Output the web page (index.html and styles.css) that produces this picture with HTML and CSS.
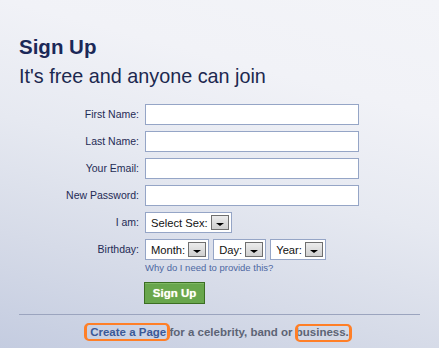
FILE: index.html
```html
<!DOCTYPE html>
<html>
<head>
<meta charset="utf-8">
<link rel="stylesheet" href="styles.css">
</head>
<body>
<div class="page">
  <h1 class="title">Sign Up</h1>
  <h2 class="subtitle">It's free and anyone can join</h2>
  <form class="form">
    <label class="label">First Name:</label>
    <input class="field" type="text">
    <label class="label">Last Name:</label>
    <input class="field" type="text">
    <label class="label">Your Email:</label>
    <input class="field" type="text">
    <label class="label">New Password:</label>
    <input class="field" type="password">
    <label class="label">I am:</label>
    <div class="selects">
      <div class="select"><span>Select Sex:</span><span class="arrow"></span></div>
    </div>
    <label class="label">Birthday:</label>
    <div class="birthday">
      <div class="selects">
        <div class="select"><span>Month:</span><span class="arrow"></span></div>
        <div class="select"><span>Day:</span><span class="arrow"></span></div>
        <div class="select"><span>Year:</span><span class="arrow"></span></div>
      </div>
      <a class="help">Why do I need to provide this?</a>
    </div>
    <div class="actions">
      <button class="btn" type="button">Sign Up</button>
    </div>
  </form>
  <div class="rule"></div>
  <p class="footer"><a class="link mark mark-a">Create a Page</a> for a celebrity, band or <span class="mark mark-b">business.</span></p>
</div>
</body>
</html>
```
FILE: styles.css
```css
html, body {
  margin: 0;
  padding: 0;
  height: 100%;
}
body {
  font-family: "Liberation Sans", Arial, sans-serif;
  background: linear-gradient(195deg, #f3f4f8 0%, #f1f2f7 25%, #e6e9f1 50%, #d6dbe8 75%, #c4cce0 100%);
  min-height: 348px;
}
.page {
  padding: 35px 19px 0 19px;
}
.title {
  margin: 0;
  font-size: 20.5px;
  line-height: 24px;
  font-weight: bold;
  color: #1b2858;
}
.subtitle {
  margin: 6px 0 0 0;
  font-size: 19.8px;
  line-height: 23px;
  font-weight: normal;
  color: #1c284f;
}
.form {
  margin-top: 16px;
  display: grid;
  grid-template-columns: 120px auto;
  column-gap: 6px;
  row-gap: 6px;
  align-items: start;
}
.label {
  text-align: right;
  font-size: 10.5px;
  line-height: 21px;
  color: #1f2b55;
}
.field {
  box-sizing: border-box;
  width: 214px;
  height: 21px;
  margin: 0;
  border: 1px solid #95a5c6;
  background: #fff;
  padding: 0 3px;
}
.selects {
  display: flex;
  gap: 4px;
}
.select {
  box-sizing: border-box;
  height: 21px;
  display: flex;
  align-items: center;
  gap: 3px;
  padding: 0 2px 0 5px;
  border: 1px solid #95a5c6;
  background: #fff;
  font-size: 11.2px;
  color: #111;
}
.arrow {
  position: relative;
  box-sizing: border-box;
  width: 18px;
  height: 15px;
  border: 1px solid #6f6f6f;
  background: linear-gradient(#ececec, #cfcfcf);
}
.arrow::after {
  content: "";
  position: absolute;
  left: 4px;
  top: 7px;
  border-left: 4px solid transparent;
  border-right: 4px solid transparent;
  border-top: 3px solid #000;
}
.birthday {
  display: flex;
  flex-direction: column;
}
.help {
  margin-top: 2px;
  font-size: 9.5px;
  line-height: 12px;
  color: #4d67a2;
}
.actions {
  grid-column: 2;
  margin-top: 2px;
}
.btn {
  box-sizing: border-box;
  margin: 0 0 0 -1px;
  width: 61px;
  height: 22px;
  padding: 0;
  border: 1px solid #3b6e22;
  background: #68a64c;
  box-shadow: inset 0 1px 0 #7fb865;
  color: #fff;
  font-family: "Liberation Sans", Arial, sans-serif;
  font-weight: bold;
  font-size: 11.5px;
  text-shadow: 0 0 1px #d8e8a0;
}
.rule {
  margin-top: 10px;
  height: 1px;
  background: #9ba4be;
}
.footer {
  margin: 10px 0 0 0;
  text-align: center;
  font-size: 11.5px;
  line-height: 14px;
  font-weight: bold;
  color: #5d6475;
}
.link {
  color: #3b5998;
}
.mark {
  position: relative;
}
.mark::after {
  content: "";
  position: absolute;
  border-style: solid;
  border-color: #ff7f27;
  border-width: 2px 3px;
  border-radius: 5px;
}
.mark-a::after {
  left: -6px;
  right: -4px;
  top: -3px;
  bottom: -3px;
}
.mark-b::after {
  left: -1px;
  right: -3px;
  top: -2px;
  bottom: -4px;
}
```
